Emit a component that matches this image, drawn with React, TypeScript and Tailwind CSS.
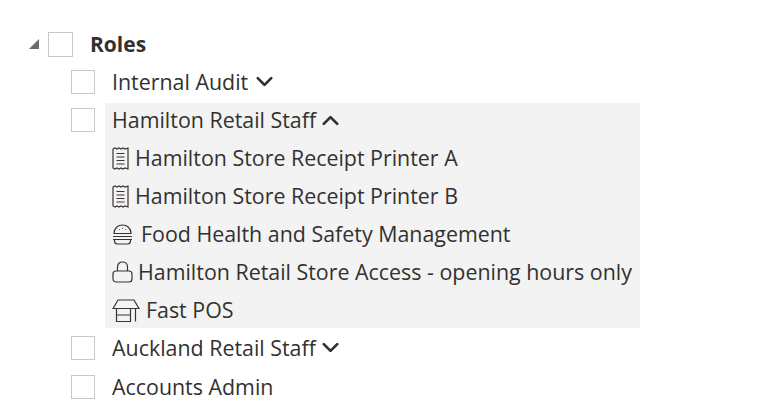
import { ChevronDown, ChevronUp } from "lucide-react";
import type { ReactNode } from "react";

function Box({ size = "small" }: { size?: "small" | "large" }) {
  return <span className={size === "large" ? "block h-[25px] w-[25px] shrink-0 border border-[#c8c8c8] bg-white" : "block h-6 w-6 shrink-0 border border-[#c8c8c8] bg-white"} />;
}

function ReceiptIcon() {
  return (
    <svg width="17" height="23" viewBox="0 0 17 23" fill="none" stroke="#3a3431" strokeWidth="1.2" className="shrink-0">
      <path d="M1 2 L3 1 L5 2 L7 1 L9 2 L11 1 L13 2 L16 1 V22 L13 21 L11 22 L9 21 L7 22 L5 21 L3 22 L1 21 Z" />
      <path d="M4.5 6.5 H12.5 M4.5 10 H12.5 M4.5 13.5 H12.5 M4.5 17 H12.5" />
    </svg>
  );
}

function BurgerIcon() {
  return (
    <svg width="21" height="21" viewBox="0 0 21 21" fill="none" stroke="#3a3431" strokeWidth="1.2" className="shrink-0">
      <path d="M2 9.5 C2 4 6 1 10.5 1 C15 1 19 4 19 9.5 Z" />
      <path d="M1 12.5 H20 M1 15.5 H20" />
      <path d="M2.5 15.5 V17 C2.5 19 4 20 5.5 20 H15.5 C17 20 18.5 19 18.5 17 V15.5" />
      <path d="M7 5.5 H7.8 M10.2 4.5 H11 M13.5 5.5 H14.3" />
    </svg>
  );
}

function LockIcon() {
  return (
    <svg width="21" height="22" viewBox="0 0 21 22" fill="none" stroke="#3a3431" strokeWidth="1.2" className="shrink-0">
      <path d="M5.5 10 V6 C5.5 3 7.5 1 10.5 1 C13.5 1 15.5 3 15.5 6 V10" />
      <rect x="1" y="10" width="19" height="11" rx="3" />
    </svg>
  );
}

function StoreIcon() {
  return (
    <svg width="28" height="23" viewBox="0 0 28 23" fill="none" stroke="#3a3431" strokeWidth="1.2" className="shrink-0">
      <path d="M6 1 H22 L27 9.5 H1 Z" />
      <path d="M4.5 9.5 V22.5 H18.5 V9.5 M4.5 16 H18.5 M23.5 9.5 V22.5" />
    </svg>
  );
}

function Row({ left, height, children }: { left?: ReactNode; height: string; children: ReactNode }) {
  return (
    <div className={`flex items-center ${height}`}>
      <div className="flex w-[105px] shrink-0 justify-end pr-[10px]">{left}</div>
      <div className="flex min-w-0 flex-1 items-center pl-[7px]">{children}</div>
    </div>
  );
}

function Item({ icon, label, gap }: { icon: ReactNode; label: string; gap: string }) {
  return (
    <div className={`flex h-[38px] items-center whitespace-nowrap pl-[7px] ${gap}`}>
      {icon}
      <span>{label}</span>
    </div>
  );
}

export default function App() {
  return (
    <div className="h-[412px] w-[758px] overflow-hidden bg-white pt-[25px] font-['Open_Sans','Noto_Sans',sans-serif] text-[21.4px] text-[#323130]">
      <div className="flex h-[38px] items-center">
        <div className="ml-[29px] h-0 w-0 border-b-[10px] border-l-[10px] border-b-[#6b6b6b] border-l-transparent" />
        <div className="ml-[9px]">
          <Box size="large" />
        </div>
        <span className="ml-[17px] pt-[2px] text-[21px] font-bold">Roles</span>
      </div>

      <div className="mb-[2px]">
        <Row left={<Box />} height="h-[38px]">
          <span>Internal Audit</span>
          <ChevronDown size={27} strokeWidth={2.4} className="ml-[3px]" />
        </Row>
      </div>

      <div className="flex">
        <div className="flex w-[105px] shrink-0 justify-end pr-[10px] pt-[5px]">
          <Box />
        </div>
        <div className="h-[225px] w-[535px] bg-[#f3f3f3]">
          <div className="flex h-[36px] items-center pb-[1px] pl-[7px]">
            <span>Hamilton Retail Staff</span>
            <ChevronUp size={27} strokeWidth={2.4} className="ml-[1px]" />
          </div>
          <Item icon={<ReceiptIcon />} label="Hamilton Store Receipt Printer A" gap="gap-[6px]" />
          <Item icon={<ReceiptIcon />} label="Hamilton Store Receipt Printer B" gap="gap-[6px]" />
          <Item icon={<BurgerIcon />} label="Food Health and Safety Management" gap="gap-2" />
          <Item icon={<LockIcon />} label="Hamilton Retail Store Access - opening hours only" gap="gap-[5px]" />
          <Item icon={<StoreIcon />} label="Fast POS" gap="gap-[6px]" />
        </div>
      </div>

      <div className="pt-[1px]">
        <Row left={<Box />} height="h-[38px]">
          <span>Auckland Retail Staff</span>
          <ChevronDown size={27} strokeWidth={2.4} className="ml-[1px]" />
        </Row>
        <Row left={<Box />} height="h-[39px]">
          <span className="pt-[2px]">Accounts Admin</span>
        </Row>
      </div>
    </div>
  );
}
